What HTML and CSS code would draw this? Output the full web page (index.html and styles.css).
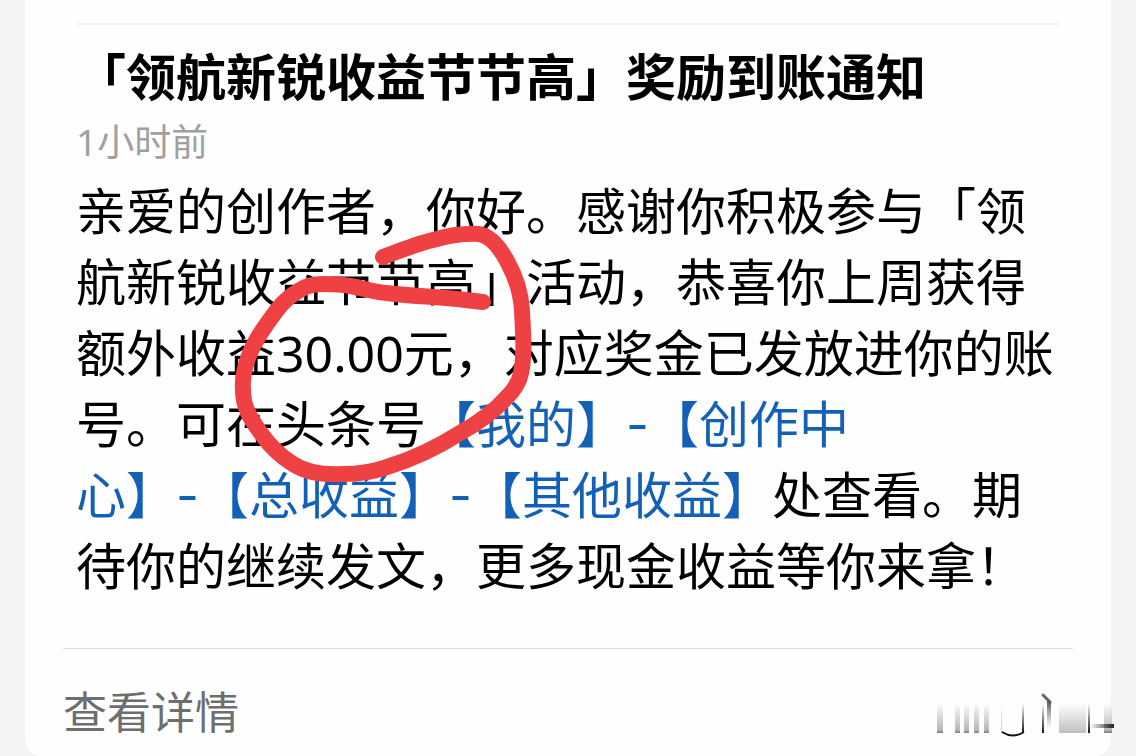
FILE: index.html
```
<!DOCTYPE html>
<html lang="zh-CN">
<head>
<meta charset="utf-8">
<meta name="viewport" content="width=device-width, initial-scale=1">
<title>奖励到账通知</title>
<link rel="stylesheet" href="styles.css">
</head>
<body>
<main class="card">
  <article class="notice">
    <h1 class="title">「领航新锐收益节节高」奖励到账通知</h1>
    <p class="time">1小时前</p>
    <div class="message">
      <p class="text">亲爱的创作者，你好。感谢你积极参与「领<br>航新锐收益节节高」活动，恭喜你上周获得<br>额外收益30.00元，对应奖金已发放进你的账<br>号。可在头条号<a class="path" href="#">【我的】<span class="dash">-</span>【创作中<br>心】<span class="dash">-</span>【总收益】<span class="dash">-</span>【其他收益】</a>处查看。期<br>待你的继续发文，更多现金收益等你来拿！</p>
      <svg class="marker" width="310" height="260" viewBox="230 224 310 260" aria-hidden="true">
        <path d="M383 257C399 251 416 244 433 240C447 236 461 233 479 234C490 236 499 246 507 261C516 277 521 295 522 310C523 334 525 354 521 373C519 384 513 391 507 397C494 412 478 423 460 433C438 447 413 459 387 467C373 472 358 474 343 474C326 475 307 473 293 464C280 456 269 445 260 432C250 418 243 407 243 390C242 377 245 365 250 353C256 338 266 325 277 310C283 302 291 295 300 290C307 285 315 284 323 284C333 284 341 284 350 286C363 288 374 292 387 293C402 295 418 296 433 297C451 298 467 300 483 302"/>
      </svg>
    </div>
  </article>
  <footer class="footer">
    <a class="detail" href="#">查看详情</a>
    <svg class="smudge" width="184" height="52" viewBox="930 686 184 52" aria-hidden="true">
      <defs>
        <linearGradient id="fade" x1="0" y1="0" x2="0" y2="1"><stop offset="0" stop-color="#888" stop-opacity="0"/><stop offset=".9" stop-color="#888" stop-opacity=".6"/><stop offset="1" stop-color="#555" stop-opacity=".8"/></linearGradient>
        <linearGradient id="dark" x1="0" y1="0" x2="0" y2="1"><stop offset="0" stop-color="#222" stop-opacity="0"/><stop offset="1" stop-color="#111"/></linearGradient>
        <linearGradient id="pale" x1="0" y1="0" x2="0" y2="1"><stop offset="0" stop-color="#999" stop-opacity="0"/><stop offset="1" stop-color="#888" stop-opacity=".55"/></linearGradient>
        <linearGradient id="side" x1="0" y1="0" x2="1" y2="0"><stop offset="0" stop-color="#333" stop-opacity="0"/><stop offset="1" stop-color="#222"/></linearGradient>
        <linearGradient id="drop" x1="0" y1="0" x2="0" y2="1"><stop offset="0" stop-color="#555"/><stop offset="1" stop-color="#777" stop-opacity="0"/></linearGradient>
        <filter id="soft" x="-10%" y="-10%" width="120%" height="120%"><feGaussianBlur stdDeviation=".7 0"/></filter>
      </defs>
      <g fill="url(#fade)" filter="url(#soft)">
        <rect x="937" y="703" width="6" height="30"/>
        <rect x="955" y="703" width="5" height="30"/>
        <rect x="964" y="703" width="5" height="30"/>
        <rect x="974" y="703" width="5" height="30"/>
        <rect x="984" y="703" width="5" height="30"/>
        <rect x="1104" y="703" width="8" height="30"/>
      </g>
      <rect x="1001" y="703" width="1" height="30" fill="url(#pale)"/>
      <rect x="1022" y="703" width="2" height="30" fill="url(#dark)"/>
      <path d="M1002 732Q1013 739 1024 732" fill="none" stroke="#111" stroke-width="2"/>
      <rect x="1042" y="703" width="2" height="30" fill="url(#dark)"/>
      <path d="M1043 695L1050 702" fill="none" stroke="#666" stroke-width="3" stroke-linecap="round"/>
      <rect x="1047" y="701" width="4" height="27" fill="url(#drop)"/>
      <rect x="1059" y="703" width="27" height="30" fill="url(#pale)"/>
      <rect x="1088" y="703" width="2" height="30" fill="url(#dark)"/>
      <rect x="1090" y="724" width="24" height="4" fill="url(#side)"/>
    </svg>
  </footer>
</main>
</body>
</html>
```
FILE: styles.css
```
* {
  box-sizing: border-box;
}

body {
  margin: 0;
  padding: 0 25px;
  background: #f3f4f6;
  color: #000;
  font-family: "Noto Sans", "Noto Sans CJK SC", sans-serif;
  text-spacing-trim: space-all;
}

.card {
  padding-top: 23px;
  background: #fefefe;
  border-radius: 0 0 16px 16px;
}

.notice {
  margin: 0 51px;
  border-top: 2px solid #f2f2f3;
  white-space: nowrap;
}

.title,
.time,
.text {
  margin: 0;
}

.title {
  padding-top: 15px;
  font-size: 50px;
  line-height: 74px;
  font-weight: 700;
}

.time {
  color: #a0a0a0;
  font-size: 37px;
  line-height: 56px;
}

.message {
  position: relative;
  padding-top: 6px;
}

.text {
  font-size: 50px;
  line-height: 71px;
}

.path {
  color: #1261b7;
  text-decoration: none;
}

.dash {
  font-family: Inter, sans-serif;
  line-height: 1;
}

.marker {
  position: absolute;
  top: 54px;
  left: 154px;
  fill: none;
  stroke: #ef4144;
  stroke-width: 16;
  stroke-linecap: round;
  stroke-linejoin: round;
}

.footer {
  display: flex;
  align-items: center;
  justify-content: space-between;
  margin: 46px 0 0 38px;
  padding: 28px 0 8px;
  background: linear-gradient(#dcdcdc, #dcdcdc) left top / calc(100% - 38px) 1px no-repeat;
}

.detail {
  color: #6d6e70;
  font-size: 44px;
  line-height: 72px;
  text-decoration: none;
}

.smudge {
  flex: none;
  margin-right: -3px;
}
```
